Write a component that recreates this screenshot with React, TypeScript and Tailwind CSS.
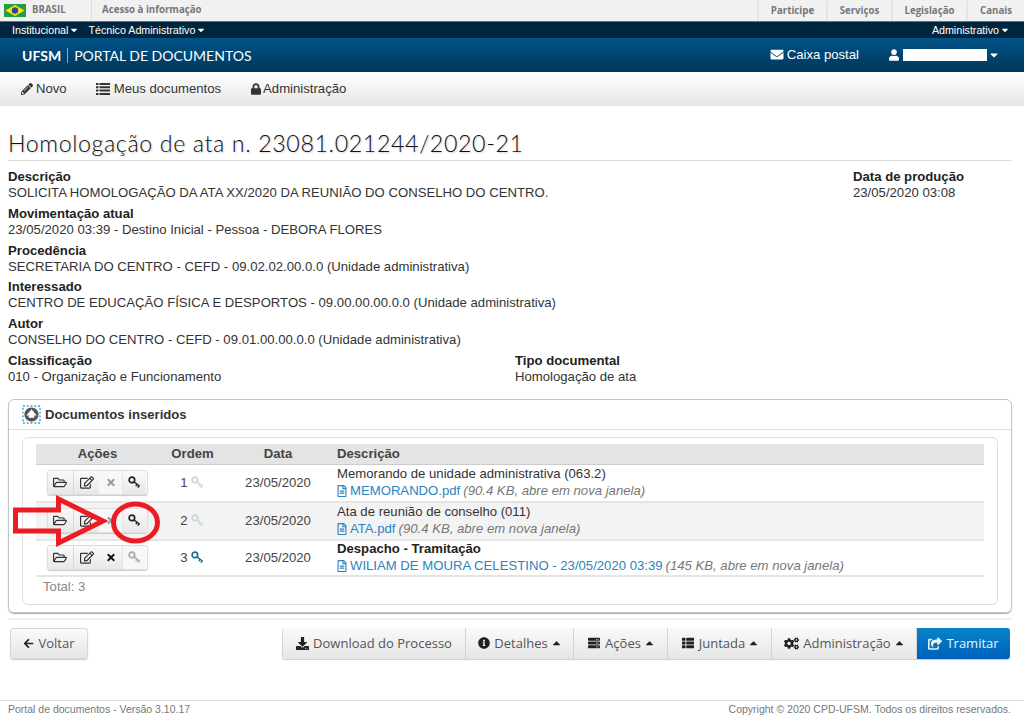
import React from "react";
import {
  FaArrowLeft,
  FaCaretDown,
  FaCaretUp,
  FaCogs,
  FaDownload,
  FaEnvelope,
  FaInfoCircle,
  FaLock,
  FaPencilAlt,
  FaRegEdit,
  FaRegFileAlt,
  FaRegFolderOpen,
  FaServer,
  FaShareSquare,
  FaThList,
  FaTimes,
  FaUser,
} from "react-icons/fa";

const KeyIcon = ({ className }: { className?: string }) => (
  <svg viewBox="0 0 14 14" className={className} fill="none" stroke="currentColor">
    <circle cx="4.2" cy="4.2" r="3" strokeWidth="1.8" />
    <path d="M6.3 6.3 L12.8 11 M9.5 8.6 L8.6 11 M11.6 10.1 L10.8 12.6" strokeWidth="1.5" />
  </svg>
);

// lista do menu, no desenho das linhas grossas do original
const ListIcon = () => (
  <svg viewBox="0 0 14 12" className="h-[12px] w-[14px]" fill="currentColor">
    <path d="M0 0h2.5v2H0zM3.5 0H14v2H3.5zM0 3.3h2.5v2H0zM3.5 3.3H14v2H3.5zM0 6.6h2.5v2H0zM3.5 6.6H14v2H3.5zM0 9.9h2.5v2H0zM3.5 9.9H14v2H3.5z" />
  </svg>
);

const BrazilFlag = () => (
  <svg viewBox="0 0 22 13" className="h-[13px] w-[22px]">
    <rect width="22" height="13" fill="#229e45" />
    <path d="M11 1 L20.5 6.5 L11 12 L1.5 6.5 Z" fill="#f8e509" />
    <circle cx="11" cy="6.5" r="3.2" fill="#2b49a3" />
  </svg>
);

const PanelIcon = () => (
  <svg viewBox="0 0 20 20" className="h-[19px] w-[19px]">
    <rect x="1" y="1" width="18" height="18" fill="none" stroke="#6db3e0" strokeWidth="2" strokeDasharray="2 2" />
    <circle cx="10" cy="10" r="7.5" fill="#555" />
    <path d="M10 4.5 L15.5 11 L13 11 L13 13.5 L7 13.5 L7 11 L4.5 11 Z" fill="#fff" />
  </svg>
);

const rows = [
  {
    bg: "bg-white",
    h: "h-[38px]",
    order: 1,
    orderKey: "text-[#c5d8e0]",
    del: "text-[#999] bg-[#f7f7f7]",
    key: "text-[#222] bg-gradient-to-b from-[#fafafa] to-[#e8e8e8]",
    title: "Memorando de unidade administrativa (063.2)",
    bold: false,
    file: "MEMORANDO.pdf",
    size: "(90.4 KB, abre em nova janela)",
  },
  {
    bg: "bg-[#f3f3f3]",
    h: "h-[38px]",
    order: 2,
    orderKey: "text-[#c5d8e0]",
    del: "text-[#999] bg-[#f7f7f7]",
    key: "text-[#222] bg-gradient-to-b from-[#fafafa] to-[#e8e8e8]",
    title: "Ata de reunião de conselho (011)",
    bold: false,
    file: "ATA.pdf",
    size: "(90.4 KB, abre em nova janela)",
  },
  {
    bg: "bg-white",
    h: "h-[36px]",
    order: 3,
    orderKey: "text-[#1f6f8f]",
    del: "text-[#111] bg-gradient-to-b from-[#fafafa] to-[#e8e8e8]",
    key: "text-[#aaa] bg-[#f7f7f7]",
    title: "Despacho - Tramitação",
    bold: true,
    file: "WILIAM DE MOURA CELESTINO - 23/05/2020 03:39",
    size: "(145 KB, abre em nova janela)",
  },
];

const info = [
  ["Descrição", "SOLICITA HOMOLOGAÇÃO DA ATA XX/2020 DA REUNIÃO DO CONSELHO DO CENTRO."],
  ["Movimentação atual", "23/05/2020 03:39 - Destino Inicial - Pessoa - DEBORA FLORES"],
  ["Procedência", "SECRETARIA DO CENTRO - CEFD - 09.02.02.00.0.0 (Unidade administrativa)"],
  ["Interessado", "CENTRO DE EDUCAÇÃO FÍSICA E DESPORTOS - 09.00.00.00.0.0 (Unidade administrativa)"],
  ["Autor", "CONSELHO DO CENTRO - CEFD - 09.01.00.00.0.0 (Unidade administrativa)"],
];

const Field = ({ label, value }: { label: string; value: string }) => (
  <div className="h-[36.8px] leading-[16px]">
    <div className="font-bold text-[#222]">{label}</div>
    <div className="text-[#333]">{value}</div>
  </div>
);

const btn =
  "flex h-[31px] items-center justify-center gap-[4px] border-r border-[#d4d4d4] bg-gradient-to-b from-[#fafafa] to-[#e6e6e6] font-['Open_Sans',sans-serif] text-[13px] text-[#555]";

export default function App() {
  return (
    <div className="relative h-[722px] w-[1024px] overflow-hidden bg-white font-['Liberation_Sans',Arial,sans-serif] text-[13.15px]">
      {/* barra do governo */}
      <div className="flex h-[22px] items-center justify-between border-b border-[#5b7486] bg-[#f1f1f1] font-['Open_Sans',sans-serif] text-[9.7px] font-bold text-[#777]">
        <div className="flex h-full items-center">
          <div className="ml-[4px]"><BrazilFlag /></div>
          <span className="ml-[6px] w-[59px]">BRASIL</span>
          <div className="h-full border-l border-[#ddd] pl-[10px] leading-[20px]">Acesso à informação</div>
        </div>
        <div className="flex h-full items-center">
          <div className="w-[69px] border-l-2 border-[#e4e4e4] text-center leading-[20px]">Participe</div>
          <div className="w-[65px] border-l-2 border-[#e4e4e4] text-center leading-[20px]">Serviços</div>
          <div className="w-[75px] border-l-2 border-[#e4e4e4] text-center leading-[20px]">Legislação</div>
          <div className="w-[58px] border-l-2 border-[#e4e4e4] text-center leading-[20px]">Canais</div>
        </div>
      </div>

      {/* menu de vínculos */}
      <div className="flex h-[16px] items-center justify-between bg-[#00263f] pl-[12px] pr-[15px] text-[10.7px] text-white">
        <div className="flex items-center gap-[10px]">
          <span className="flex items-center gap-[2px]">Institucional <FaCaretDown className="h-[10px] w-[8px]" /></span>
          <span className="flex items-center gap-[2px]">Técnico Administrativo <FaCaretDown className="h-[10px] w-[8px]" /></span>
        </div>
        <span className="flex items-center gap-[2px]">Administrativo <FaCaretDown className="h-[10px] w-[8px]" /></span>
      </div>

      {/* cabeçalho */}
      <div className="flex h-[34px] items-center justify-between bg-gradient-to-b from-[#005388] to-[#00375c] text-white">
        <div className="ml-[22px] flex items-center font-['Lato',sans-serif] text-[14px]">
          <span className="font-bold">UFSM</span>
          <span className="mx-[6px] h-[15px] border-l border-[#7fb0d0]" />
          <span>PORTAL DE DOCUMENTOS</span>
        </div>
        <div className="mr-[26px] flex items-center">
          <FaEnvelope className="mr-[3px] h-[13px] w-[14px]" />
          <span>Caixa postal</span>
          <FaUser className="ml-[30px] h-[12px] w-[10px]" />
          <span className="ml-[4px] h-[12px] w-[84px] bg-white" />
          <FaCaretDown className="ml-[3px] h-[12px] w-[8px]" />
        </div>
      </div>

      {/* navegação */}
      <div className="flex h-[34px] items-center bg-gradient-to-b from-white to-[#e6e6e6] pl-[21px] text-[#333]">
        <span className="flex items-center gap-[3px]"><FaPencilAlt className="h-[12px] w-[12px]" /> Novo</span>
        <span className="ml-[29px] flex items-center gap-[4px]"><ListIcon /> Meus documentos</span>
        <span className="ml-[30px] flex items-center gap-[2px]"><FaLock className="h-[12px] w-[10px]" /> Administração</span>
      </div>

      <div className="px-[8px]">
        <h1 className="mt-[22px] h-[33px] w-[1004px] border-b border-[#ddd] font-['Lato',sans-serif] text-[23.25px] font-light leading-[31px] tracking-[0.6px] text-[#111] [text-shadow:1px_1px_2px_#ccc]">
          Homologação de ata n. 23081.021244/2020-21
        </h1>

        {/* dados do processo */}
        <div className="mt-[8px] flex w-[1004px]">
          <div className="flex-1">
            {info.map(([label, value]) => (
              <Field key={label} label={label} value={value} />
            ))}
          </div>
          <div className="w-[159px] leading-[16px]">
            <div className="font-bold text-[#222]">Data de produção</div>
            <div className="text-[#333]">23/05/2020 03:08</div>
          </div>
        </div>
        <div className="flex">
          <div className="w-[507px]"><Field label="Classificação" value="010 - Organização e Funcionamento" /></div>
          <Field label="Tipo documental" value="Homologação de ata" />
        </div>

        {/* documentos */}
        <div className="mt-[9px] h-[214px] w-[1004px] rounded-[6px] border border-[#c4c4c4] shadow-[0_1px_1px_#aaa]">
          <div className="flex h-[30px] items-center border-b border-[#ddd] pl-[13px] pt-[1px] font-bold text-[#333]">
            <PanelIcon />
            <span className="ml-[4px]">Documentos inseridos</span>
          </div>
          <div className="ml-[13px] mt-[7px] h-[168px] w-[976px] rounded-[6px] border border-[#ddd] px-[13px] pt-[6px]">
            <div className="flex h-[21px] items-center border-b border-[#ccc] bg-[#e4e4e4] pt-[1px] font-bold text-[#444]">
              <div className="w-[123px] text-center">Ações</div>
              <div className="w-[67px] text-center">Ordem</div>
              <div className="w-[104px] text-center">Data</div>
              <div className="pl-[7px]">Descrição</div>
            </div>
            {rows.map((r) => (
              <div key={r.order} className={`flex items-center border-b-2 border-[#e4e4e4] ${r.bg} ${r.h}`}>
                <div className="flex w-[122px] justify-center">
                  <div className="flex h-[25px] w-[101px] overflow-hidden rounded-[3px] border border-[#ddd] shadow-[0_1px_1px_#ccc]">
                    <span className="flex w-[26px] items-center justify-center bg-gradient-to-b from-[#fafafa] to-[#e8e8e8] text-[#333]"><FaRegFolderOpen className="h-[13px] w-[14px]" /></span>
                    <span className="flex w-[27px] items-center justify-center border-l border-[#d8d8d8] bg-gradient-to-b from-[#fafafa] to-[#e8e8e8] text-[#333]"><FaRegEdit className="h-[13px] w-[14px]" /></span>
                    <span className={`flex w-[23px] items-center justify-center ${r.del}`}><FaTimes className="h-[11px] w-[10px]" /></span>
                    <span className={`flex w-[25px] items-center justify-center border-l border-[#e4e4e4] ${r.key}`}><KeyIcon className="h-[13px] w-[13px]" /></span>
                  </div>
                </div>
                <div className="flex w-[68px] items-center justify-center gap-[3px] text-[#444]">
                  {r.order}
                  <KeyIcon className={`h-[13px] w-[13px] ${r.orderKey}`} />
                </div>
                <div className="w-[104px] text-center text-[#444]">23/05/2020</div>
                <div className="pl-[7px] leading-[16.5px]">
                  <div className={r.bold ? "font-bold text-[#222]" : "text-[#333]"}>{r.title}</div>
                  <div className="flex items-center text-[#2a84c0]">
                    <FaRegFileAlt className="mr-[3px] h-[12px] w-[10px]" />
                    {r.file}
                    <i className="ml-[3px] text-[#777]">{r.size}</i>
                  </div>
                </div>
              </div>
            ))}
            <div className="pl-[7px] pt-[1px] leading-[18px] text-[#888]">Total: 3</div>
          </div>
        </div>

        <div className="mt-[5px] w-[1004px] border-t-2 border-[#eee]" />

        {/* ações */}
        <div className="ml-[2px] mt-[8px] flex h-[31px] w-[1000px] justify-between">
          <div className="flex h-[31px] w-[78px] items-center justify-center gap-[4px] rounded-[3px] border border-[#d8d8d8] bg-gradient-to-b from-[#fafafa] to-[#e6e6e6] font-['Open_Sans',sans-serif] text-[13px] text-[#555] shadow-[0_1px_1px_#ccc]">
            <FaArrowLeft className="h-[11px] w-[11px] text-[#222]" /> Voltar
          </div>
          <div className="flex overflow-hidden rounded-[3px] shadow-[0_1px_1px_#ccc]">
            <div className={`${btn} w-[184px] rounded-l-[3px] border-l`}><FaDownload className="h-[13px] w-[13px] text-[#222]" /> Download do Processo</div>
            <div className={`${btn} w-[108px]`}><FaInfoCircle className="h-[12px] w-[12px] text-[#222]" /> Detalhes <FaCaretUp className="h-[12px] w-[9px] text-[#222]" /></div>
            <div className={`${btn} w-[94px]`}><FaServer className="h-[12px] w-[14px] text-[#222]" /> Ações <FaCaretUp className="h-[12px] w-[9px] text-[#222]" /></div>
            <div className={`${btn} w-[104px]`}><FaThList className="h-[12px] w-[14px] text-[#222]" /> Juntada <FaCaretUp className="h-[12px] w-[9px] text-[#222]" /></div>
            <div className={`${btn} w-[145px]`}><FaCogs className="h-[13px] w-[15px] text-[#222]" /> Administração <FaCaretUp className="h-[12px] w-[9px] text-[#222]" /></div>
            <div className="flex h-[31px] w-[93px] items-center justify-center gap-[4px] bg-gradient-to-b from-[#0a84c8] to-[#0060bb] font-['Open_Sans',sans-serif] text-[13px] text-[#e8f4fb]">
              <FaShareSquare className="h-[13px] w-[14px]" /> Tramitar
            </div>
          </div>
        </div>
      </div>

      {/* rodapé */}
      <div className="mt-[41px] flex h-[22px] justify-between border-t border-[#ddd] pl-[8px] pr-[13px] text-[10.5px] leading-[16px] text-[#777]">
        <span>Portal de documentos - Versão 3.10.17</span>
        <span>Copyright © 2020 CPD-UFSM. Todos os direitos reservados.</span>
      </div>

      {/* marcação vermelha sobre a captura */}
      <svg className="absolute left-0 top-0 h-[722px] w-[1024px]" viewBox="0 0 1024 722" fill="none" stroke="#ed1c24" strokeWidth="5">
        <path d="M15.5 510 H58.5 V499 L103 521 L58.5 543 V531 H15.5 Z" strokeLinejoin="miter" />
        <ellipse cx="135.5" cy="522.5" rx="22" ry="18.5" strokeWidth="5" />
      </svg>
    </div>
  );
}
